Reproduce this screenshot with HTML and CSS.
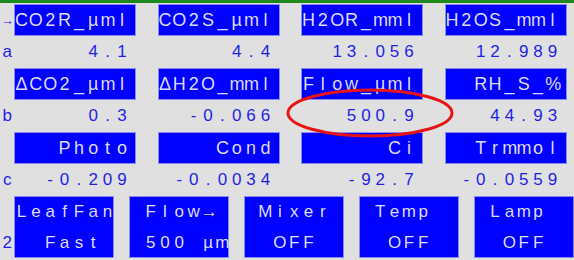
FILE: index.html
```html
<!DOCTYPE html>
<html lang="en">
<head>
    <meta charset="UTF-8">
    <title>LI-6400 Display</title>
    <link rel="stylesheet" href="styles.css">
</head>
<body>
    <div class="screen">
        <div class="line">
            <span class="mark arrow cells">→</span>
            <div class="field box cells">CO2R_µml</div>
            <div class="field box cells">CO2S_µml</div>
            <div class="field box cells">H2OR_mml</div>
            <div class="field box cells">H2OS_mml</div>
        </div>
        <div class="line">
            <span class="mark cells">a</span>
            <div class="field val cells">     4.1</div>
            <div class="field val cells">     4.4</div>
            <div class="field val cells">  13.056</div>
            <div class="field val cells">  12.989</div>
        </div>
        <div class="line">
            <span class="mark cells"> </span>
            <div class="field box cells">ΔCO2_µml</div>
            <div class="field box cells">ΔH2O_mml</div>
            <div class="field box cells">Flow_µml</div>
            <div class="field box cells">  RH_S_%</div>
        </div>
        <div class="line">
            <span class="mark cells">b</span>
            <div class="field val cells">     0.3</div>
            <div class="field val cells">  -0.066</div>
            <div class="field val cells">   500.9</div>
            <div class="field val cells">   44.93</div>
        </div>
        <div class="line">
            <span class="mark cells"> </span>
            <div class="field box cells">   Photo</div>
            <div class="field box cells">    Cond</div>
            <div class="field box cells">      Ci</div>
            <div class="field box cells">  Trmmol</div>
        </div>
        <div class="line">
            <span class="mark cells">c</span>
            <div class="field val cells">  -0.209</div>
            <div class="field val cells"> -0.0034</div>
            <div class="field val cells">   -92.7</div>
            <div class="field val cells"> -0.0559</div>
        </div>

        <div class="keys">
            <span class="mark key-mark cells">2</span>
            <div class="key">
                <div class="key-line cells">LeafFan</div>
                <div class="key-line cells">  Fast</div>
            </div>
            <div class="key">
                <div class="key-line cells"> Flow→</div>
                <div class="key-line cells"> 500 µm</div>
            </div>
            <div class="key">
                <div class="key-line cells"> Mixer</div>
                <div class="key-line cells">  OFF</div>
            </div>
            <div class="key">
                <div class="key-line cells"> Temp</div>
                <div class="key-line cells">  OFF</div>
            </div>
            <div class="key">
                <div class="key-line cells"> Lamp</div>
                <div class="key-line cells">  OFF</div>
            </div>
        </div>
    </div>

    <svg class="highlight" width="168" height="50" viewBox="0 0 168 50">
        <ellipse cx="84" cy="25" rx="82" ry="23" fill="none" stroke="#e81414" stroke-width="3"/>
    </svg>

    <script>
        // The display is a fixed character grid: put every char in its own cell
        document.querySelectorAll('.cells').forEach(el => {
            const text = el.textContent;
            el.textContent = '';
            for (const ch of text) {
                const cell = document.createElement('span');
                cell.className = 'ch';
                cell.textContent = ch;
                el.appendChild(cell);
            }
        });
    </script>
</body>
</html>
```

FILE: styles.css
```css
body {
    margin: 0;
    width: 574px;
    height: 260px;
    overflow: hidden;
    position: relative;
    background: #e0e0e0;
    font-family: 'Liberation Sans', Arial, sans-serif;
}

.screen {
    border-top: 3px solid #1e8a1e;
    padding-top: 1px;
}

.line {
    display: flex;
    height: 32px;
}

.cells {
    display: flex;
    align-items: center;
}

.ch {
    flex: none;
    width: 14.35px;
    text-align: center;
    white-space: pre;
}

.mark {
    flex: none;
    width: 14.35px;
    color: #1e1ee8;
    font-size: 17px;
}

.arrow {
    font-size: 13px;
}

.field {
    flex: none;
    width: 122px;
    height: 32px;
    margin-right: 21.5px;
}

.box {
    background: #0000ff;
    box-shadow: inset 0 0 0 1px #8c8cf0;
    color: #dcdcf8;
    font-size: 18px;
}

.val {
    color: #1e1ee8;
    font-size: 17px;
}

.keys {
    display: flex;
    height: 62px;
}

.key-mark {
    align-self: flex-end;
    height: 31px;
}

.key {
    flex: none;
    width: 100px;
    height: 62px;
    margin-right: 14.8px;
    background: #0000ff;
    box-shadow: inset 0 0 0 1px #8c8cf0;
    color: #dcdcf8;
    font-size: 17px;
}

.key-line {
    height: 31px;
}

.highlight {
    position: absolute;
    left: 286px;
    top: 88px;
}
```
